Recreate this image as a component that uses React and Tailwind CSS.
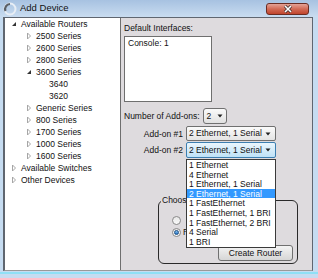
const TREE = [
  { label: "Available Routers", level: 0, state: "open" },
  { label: "2500 Series", level: 1, state: "closed" },
  { label: "2600 Series", level: 1, state: "closed" },
  { label: "2800 Series", level: 1, state: "closed" },
  { label: "3600 Series", level: 1, state: "open" },
  { label: "3640", level: 2 },
  { label: "3620", level: 2 },
  { label: "Generic Series", level: 1, state: "closed" },
  { label: "800 Series", level: 1, state: "closed" },
  { label: "1700 Series", level: 1, state: "closed" },
  { label: "1000 Series", level: 1, state: "closed" },
  { label: "1600 Series", level: 1, state: "closed" },
  { label: "Available Switches", level: 0, state: "closed" },
  { label: "Other Devices", level: 0, state: "closed" },
];

const OPTIONS = [
  "1 Ethernet",
  "4 Ethernet",
  "1 Ethernet, 1 Serial",
  "2 Ethernet, 1 Serial",
  "1 FastEthernet",
  "1 FastEthernet, 1 BRI",
  "1 FastEthernet, 2 BRI",
  "4 Serial",
  "1 BRI",
];

function Expander({ state }) {
  if (state === "open") {
    return (
      <svg width="6" height="6" viewBox="0 0 6 6" className="shrink-0">
        <path d="M5 1 L5 5 L1 5 Z" fill="#333" />
      </svg>
    );
  }
  return (
    <svg width="6" height="8" viewBox="0 0 6 8" className="shrink-0">
      <path d="M1.5 1 L4.5 4 L1.5 7 Z" fill="none" stroke="#a6a6a6" strokeWidth="1" />
    </svg>
  );
}

function TreeRow({ item }) {
  const indent = item.level === 0 ? "pl-[6px]" : item.level === 1 ? "pl-[21px]" : "pl-[44px]";
  return (
    <div className={`flex h-[12px] items-center ${indent}`}>
      {item.state ? (
        <span className="flex w-[10px] items-center justify-start">
          <Expander state={item.state} />
        </span>
      ) : null}
      <span className="whitespace-nowrap text-[8.5px] text-[#111]">{item.label}</span>
    </div>
  );
}

function Arrow() {
  return (
    <svg width="6" height="4" viewBox="0 0 6 4" className="shrink-0">
      <path d="M0.5 0.5 L5.5 0.5 L3 3.5 Z" fill="#222" />
    </svg>
  );
}

function Radio({ checked }) {
  return (
    <span className="flex h-[9px] w-[9px] shrink-0 items-center justify-center rounded-full border border-[#8a8a8a] bg-gradient-to-b from-[#e8e8e8] to-[#fafafa]">
      {checked ? (
        <span className="h-[5px] w-[5px] rounded-full border border-[#1c4f86] bg-gradient-to-b from-[#8ac6f2] to-[#1f6fc0]" />
      ) : null}
    </span>
  );
}

export default function App() {
  return (
    <div
      className="flex h-[278px] w-[318px] flex-col overflow-hidden bg-[#c6dcf1]"
      style={{ fontFamily: '"Liberation Sans", Arial, sans-serif' }}
    >
      {/* title bar */}
      <div className="relative flex h-[17px] shrink-0 items-center bg-gradient-to-b from-[#a7c2e1] to-[#c9dcf0] pl-[3px]">
        <svg width="14" height="14" viewBox="0 0 14 14" className="shrink-0">
          <circle cx="7" cy="7" r="5.5" fill="none" stroke="#e8eef5" strokeWidth="2" />
          <path d="M2.5 9 A5 5 0 0 1 7 2" fill="none" stroke="#5b5f66" strokeWidth="2.2" />
        </svg>
        <span className="ml-[3px] text-[9.5px] text-[#111]">Add Device</span>
        <div className="absolute left-[266px] top-[3px] flex h-[12px] w-[43px] items-center justify-center rounded-[3px] border border-[#6b2c22] bg-gradient-to-b from-[#e3a296] via-[#d26a55] to-[#c0452d]">
          <svg width="10" height="8" viewBox="0 0 10 8">
            <path d="M2 1 L8 7 M8 1 L2 7" stroke="#3a2a2a" strokeWidth="3" />
            <path d="M2 1 L8 7 M8 1 L2 7" stroke="#fff" strokeWidth="1.6" />
          </svg>
        </div>
      </div>

      {/* body */}
      <div className="ml-[3px] mr-[5px] flex h-[254px] shrink-0 border-b border-l-2 border-r border-t border-[#5f6670] border-b-[#9a9a9a]">
        {/* tree */}
        <div className="w-[116px] shrink-0 border-r border-[#6e6e6e] bg-white">
          {TREE.map((item) => (
            <TreeRow key={item.label} item={item} />
          ))}
        </div>

        {/* right panel */}
        <div className="relative flex-1 bg-[#dedbde] pl-[3px] text-[8.5px] text-[#111]">
          <div className="mt-[5px] h-[10px] leading-[10px]">Default Interfaces:</div>
          <div className="mt-[3px] h-[66px] w-[88px] border border-[#6f6f6f] bg-white pl-[3px] pt-[1px] leading-[10px]">
            Console: 1
          </div>

          <div className="mt-[6px] flex items-center">
            <span className="leading-[10px]">Number of Add-ons:</span>
            <div className="ml-[3px] flex h-[16px] w-[24px] items-center justify-between rounded-[3px] border border-[#707070] bg-gradient-to-b from-[#fafafa] to-[#e1e1e1] px-[3px]">
              <span>2</span>
              <Arrow />
            </div>
          </div>

          <div className="mt-[2px] flex items-center">
            <span className="w-[62px] pr-[3px] text-right leading-[10px]">Add-on #1</span>
            <div className="flex h-[15px] w-[90px] items-center justify-between rounded-[2px] border border-[#707070] bg-gradient-to-b from-[#fbfbfb] to-[#e4e4e4] pl-[2px] pr-[4px]">
              <span className="whitespace-nowrap">2 Ethernet, 1 Serial</span>
              <Arrow />
            </div>
          </div>

          <div className="mt-[1px] flex items-center">
            <span className="w-[62px] pr-[3px] text-right leading-[10px]">Add-on #2</span>
            <div className="flex h-[16px] w-[90px] items-center justify-between rounded-[2px] border border-[#3c7fb1] bg-gradient-to-b from-[#eaf6fd] to-[#bfe2f7] pl-[2px] pr-[4px]">
              <span className="whitespace-nowrap">2 Ethernet, 1 Serial</span>
              <Arrow />
            </div>
          </div>

          {/* group box */}
          <div className="relative ml-[34px] mt-[42px] h-[64px] w-[140px] rounded-[6px] border-[1.5px] border-[#2a2a2a]">
            <span className="absolute left-[2px] top-[-6px] bg-[#dedbde] pl-[1px] pr-[3px] leading-[10px]">
              Choose
            </span>
            <div className="ml-[13px] mt-[14px] flex h-[10px] items-center">
              <Radio />
            </div>
            <div className="ml-[13px] mt-[2px] flex h-[10px] items-center gap-[2px]">
              <Radio checked />
              <span className="leading-[10px]">R</span>
            </div>
            <div className="mt-[8px] flex justify-end pr-[4px]">
              <div className="flex h-[16px] w-[75px] items-center justify-center rounded-[3px] border border-[#707070] bg-gradient-to-b from-[#f4f4f4] to-[#d6d6d6]">
                Create Router
              </div>
            </div>
          </div>

          {/* open dropdown list */}
          <div className="absolute left-[65px] top-[141px] w-[90px] border border-[#3a3a3a] bg-white pb-[1px]">
            {OPTIONS.map((opt) => (
              <div
                key={opt}
                className={`h-[9.6px] whitespace-nowrap pl-[2px] leading-[10px] ${
                  opt === "2 Ethernet, 1 Serial" ? "bg-[#3399ff] text-white" : ""
                }`}
              >
                {opt}
              </div>
            ))}
          </div>
        </div>
      </div>
      <div className="mt-[1px] h-[2px] w-full bg-[#8fe0f6]" />
    </div>
  );
}
